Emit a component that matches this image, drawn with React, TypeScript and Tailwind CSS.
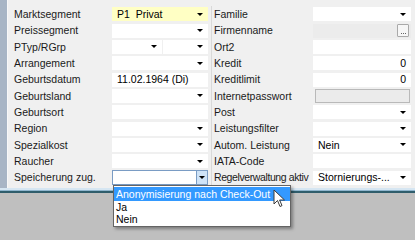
import React from "react";

type Field = {
  kind: "select" | "text" | "split" | "disabled" | "button" | "focus";
  value?: string;
  align?: "right";
  bg?: string;
};

const leftRows: { label: string; field: Field }[] = [
  { label: "Marktsegment", field: { kind: "select", value: "P1  Privat", bg: "yellow" } },
  { label: "Preissegment", field: { kind: "select" } },
  { label: "PTyp/RGrp", field: { kind: "split" } },
  { label: "Arrangement", field: { kind: "select" } },
  { label: "Geburtsdatum", field: { kind: "text", value: "11.02.1964 (Di)" } },
  { label: "Geburtsland", field: { kind: "select" } },
  { label: "Geburtsort", field: { kind: "text" } },
  { label: "Region", field: { kind: "select" } },
  { label: "Spezialkost", field: { kind: "select" } },
  { label: "Raucher", field: { kind: "select" } },
  { label: "Speicherung zug.", field: { kind: "focus" } },
];

const rightRows: { label: string; field: Field }[] = [
  { label: "Familie", field: { kind: "select" } },
  { label: "Firmenname", field: { kind: "button" } },
  { label: "Ort2", field: { kind: "text" } },
  { label: "Kredit", field: { kind: "text", value: "0", align: "right" } },
  { label: "Kreditlimit", field: { kind: "text", value: "0", align: "right" } },
  { label: "Internetpasswort", field: { kind: "disabled" } },
  { label: "Post", field: { kind: "select" } },
  { label: "Leistungsfilter", field: { kind: "select" } },
  { label: "Autom. Leistung", field: { kind: "select", value: "Nein" } },
  { label: "IATA-Code", field: { kind: "text" } },
  { label: "Regelverwaltung aktiv", field: { kind: "select", value: "Stornierungs-..." } },
];

function Arrow() {
  return (
    <span className="w-0 h-0 border-l-[3px] border-r-[3px] border-t-[3px] border-l-transparent border-r-transparent border-t-black" />
  );
}

function Input({ field }: { field: Field }) {
  if (field.kind === "split") {
    return (
      <div className="flex h-[14px] w-full gap-[1px]">
        <div className="flex-1 bg-white flex items-center justify-end pr-[5px]">
          <Arrow />
        </div>
        <div className="w-[45px] bg-white flex items-center justify-end pr-[5px]">
          <Arrow />
        </div>
      </div>
    );
  }
  if (field.kind === "disabled") {
    return <div className="h-[14px] w-[95px] ml-[2px] bg-[#ebebeb] border border-[#b9b9b9]" />;
  }
  if (field.kind === "button") {
    return (
      <div className="h-[14px] w-full bg-[#ececec] flex items-center justify-end pr-[2px]">
        <div className="h-[13px] w-[12px] bg-[#f6f6f6] border border-[#a9a9a9] rounded-[1px] flex items-end justify-center gap-[1px] pb-[2px]">
          <span className="w-[1px] h-[1px] bg-[#666]" />
          <span className="w-[1px] h-[1px] bg-[#666]" />
          <span className="w-[1px] h-[1px] bg-[#666]" />
        </div>
      </div>
    );
  }
  if (field.kind === "focus") {
    return (
      <div className="h-[15px] w-full bg-white border border-[#7a9cc4] flex items-center justify-end">
        <div className="h-full w-[11px] bg-[#cfe3f7] border-l border-[#7a9cc4] flex items-center justify-center">
          <Arrow />
        </div>
      </div>
    );
  }
  const bg = field.bg === "yellow" ? "bg-[#ffffc4]" : "bg-white";
  return (
    <div
      className={`h-[14px] w-full ${bg} flex items-center pl-[5px] pr-[5px] ${
        field.align === "right" ? "justify-end pr-[2px]" : "justify-between"
      }`}
    >
      <span className="whitespace-pre">{field.value ?? ""}</span>
      {field.kind === "select" && <Arrow />}
    </div>
  );
}

function Column({
  rows,
  labelW,
  inputW,
  labelPad,
}: {
  rows: { label: string; field: Field }[];
  labelW: string;
  inputW: string;
  labelPad: string;
}) {
  return (
    <div className="flex flex-col">
      {rows.map((r) => (
        <div key={r.label} className="h-[16.35px] flex items-center">
          <div
            className={`${labelW} ${labelPad} text-[#1a1a1a] whitespace-nowrap ${
              r.label.length > 18 ? "tracking-[-0.4px]" : ""
            }`}
          >
            {r.label}
          </div>
          <div className={`${inputW} flex items-center`}>
            <Input field={r.field} />
          </div>
        </div>
      ))}
    </div>
  );
}

export default function App() {
  return (
    <div
      className="relative w-[415px] h-[240px] overflow-hidden bg-[#bfbfbf] text-[10.5px] leading-none"
      style={{ fontFamily: '"Liberation Sans", Arial, sans-serif' }}
    >
      <div className="flex h-[188px]">
        <div className="w-[7px] bg-[#a8b5c5]" />
        <div className="w-[1px] bg-[#f8f8f8]" />
        <div className="flex-1 bg-[#f0f0f0] pt-[6px] flex">
          <Column rows={leftRows} labelW="w-[104px]" inputW="w-[96px]" labelPad="pl-[6px]" />
          <div className="ml-[3px] border-l border-[#d9d9d9]">
            <Column rows={rightRows} labelW="w-[101px]" inputW="w-[98px]" labelPad="pl-[2px]" />
          </div>
        </div>
      </div>
      <div className="h-[2px] bg-[#d6e6f2]" />
      <div className="h-[1px] bg-[#8fb6cf]" />
      <div className="h-[2px] bg-[#2f5d6c]" />

      {/* open dropdown list */}
      <div className="absolute left-[113px] top-[185px] w-[178px] bg-white border border-[#646464] shadow-[2px_2px_3px_rgba(0,0,0,0.35)] py-[1px]">
        <div className="h-[14px] bg-[#3399ff] text-white flex items-center pl-[2px]">
          Anonymisierung nach Check-Out
        </div>
        <div className="h-[12px] flex items-center pl-[2px] text-black">Ja</div>
        <div className="h-[12px] flex items-center pl-[2px] text-black">Nein</div>
      </div>

      {/* mouse pointer */}
      <svg className="absolute left-[273px] top-[189px]" width="13" height="20" viewBox="0 0 13 20">
        <path
          d="M1 1 L1 15 L4.5 11.5 L7 17.5 L9 16.6 L6.6 11 L11.5 11 Z"
          fill="white"
          stroke="#3a3a3a"
          strokeWidth="1"
          strokeLinejoin="round"
        />
      </svg>
    </div>
  );
}
